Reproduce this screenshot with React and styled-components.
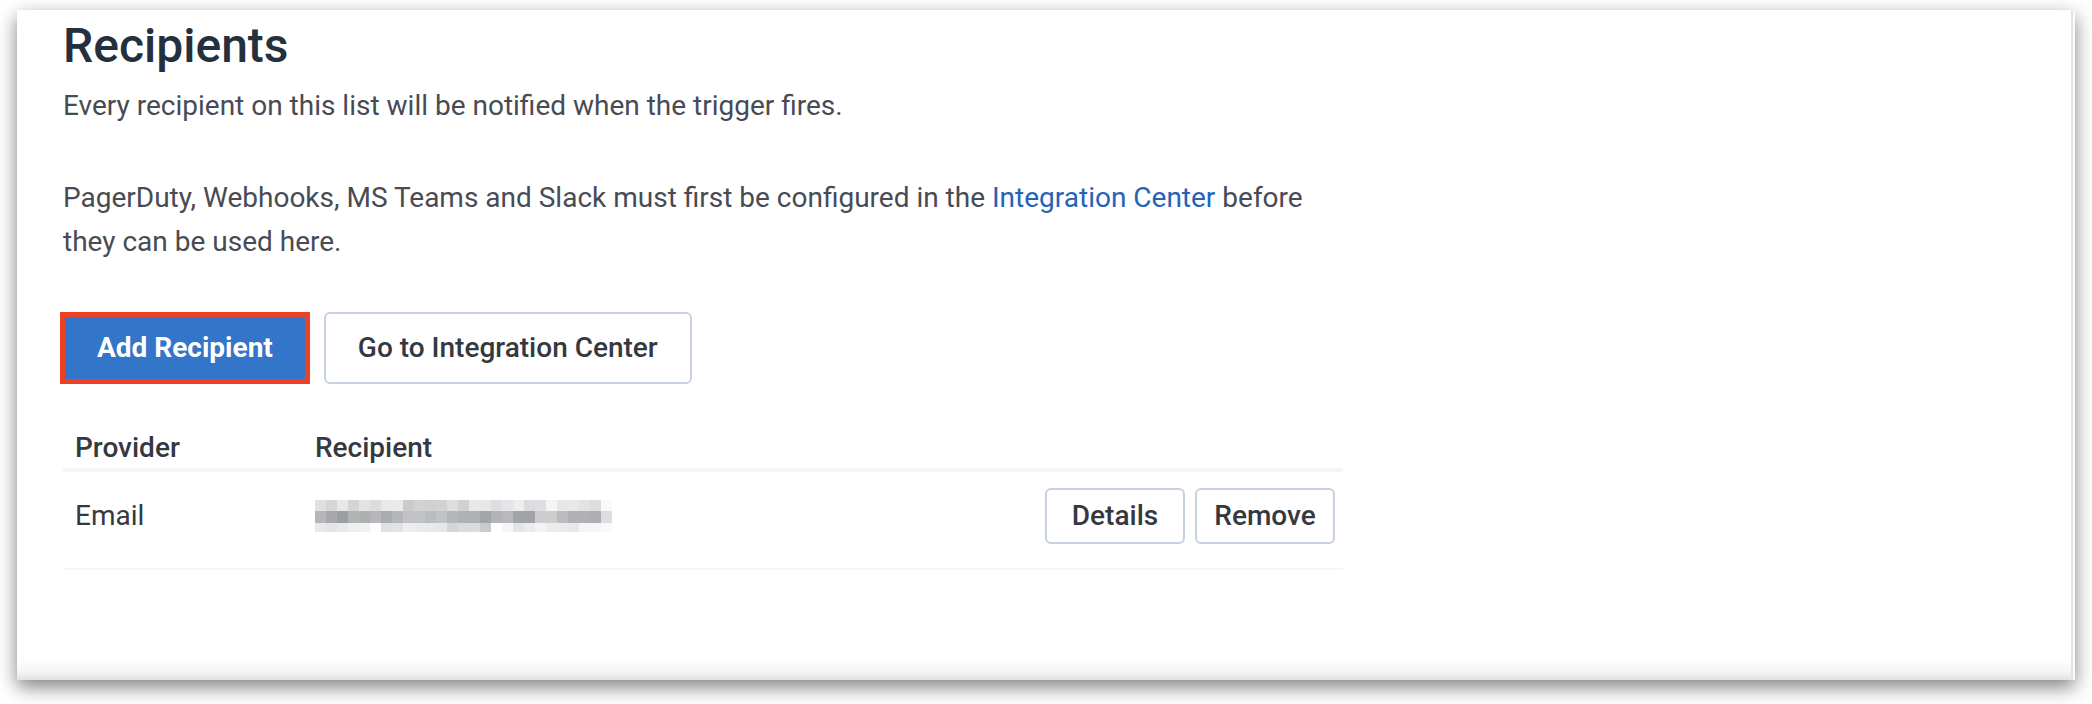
import React from "react";
import styled, { createGlobalStyle } from "styled-components";

const GlobalStyle = createGlobalStyle`
  * {
    box-sizing: border-box;
  }

  body {
    margin: 0;
    background: #fff;
    color: #36383f;
    font-family: Roboto, "Liberation Sans", sans-serif;
    font-size: 28px;
    line-height: 44px;
  }
`;

const Page = styled.div`
  padding: 10px 17px 24px;
`;

const Card = styled.main`
  padding: 8px 46px 110px;
  border-right: 2px solid #fafafa;
  background: linear-gradient(to top, #e2e2e2, #f4f4f4 8px, #fdfdfd 18px, #fff 26px);
  box-shadow:
    inset -2px 0 0 #e4e4e4,
    0 7px 18px rgba(0, 0, 0, 0.5);
`;

const Section = styled.section`
  max-width: 1280px;
`;

const Title = styled.h1`
  margin: 0 0 10px;
  color: #25303e;
  font-size: 48px;
  font-weight: 500;
  line-height: 56px;
`;

const Text = styled.p`
  margin: 0 0 48px;
  color: #484b54;
`;

const Link = styled.a`
  color: #2463b6;
  text-decoration: none;
`;

const Actions = styled.div`
  display: flex;
  align-items: center;
  gap: 14px;
  margin: 0 0 48px -3px;
`;

const Button = styled.button`
  height: 72px;
  padding: 0 32px;
  border: 2px solid #c8d1df;
  border-radius: 6px;
  background: #fff;
  color: #36383f;
  font: inherit;
  font-weight: 500;
  line-height: 32px;
  cursor: pointer;
`;

const HighlightedButton = styled(Button)`
  border: 5px solid #ec4127;
  border-radius: 0;
  background: #3375c8;
  color: #fff;
  font-weight: 700;
`;

const SmallButton = styled(Button)`
  width: 140px;
  height: 56px;
  padding: 0;
`;

const Table = styled.table`
  width: 100%;
  border-spacing: 0;
  table-layout: fixed;
  line-height: 32px;
`;

const HeadCell = styled.th`
  width: ${({ $width }) => $width || "auto"};
  padding: 0 12px 4px;
  border-bottom: 4px solid #f4f6fb;
  font-weight: 500;
  text-align: left;
`;

const Cell = styled.td`
  padding: 16px 12px 24px;
  border-bottom: 2px solid #f4f6fb;
  vertical-align: middle;
`;

const RowActions = styled.div`
  display: flex;
  justify-content: flex-end;
  gap: 10px;
  margin-right: -4px;
`;

const Mosaic = styled.svg`
  display: block;
`;

const mosaicRows = [
  {
    y: 0,
    height: 11,
    colors:
      "dfe0e2 d5d6d8 e7e8ea d3d4d6 e3e3e3 dddddd e8eae9 eaeae9 cacbcd d1d2d4 cfd0d2 d1d2d4 dedede d0d1d2 e7e9e7 e6e7e6 dddee0 e4e5e8 eeeeee dbdcdf dddee0 f2f5f3 e7e7e7 e7e8eb e3e3e3 dddddd f8faf9",
  },
  {
    y: 11,
    height: 12,
    colors:
      "b5b6b8 a8a9ae 9d9ea3 b2b3b5 afb0b1 b6b7b9 aaabb0 b6b7b9 c1c2c6 c1c2c6 bbbcbe c2c3c6 b5b6b9 b0b1b5 b0b1b5 a3a4a9 b3b4b7 b8b9bb a3a4a8 a2a3a7 cccdd0 cccdcf bbbcbe b0b1b5 b0b1b4 aeafb2 dedee1",
  },
  {
    y: 23,
    height: 9,
    colors:
      "e9e9ea e5e5e6 e8e9eb eef0ef f0f2f1 fdfdfd dfe0e4 e2e3e6 eeeeee eaebec e8e9ea e6e7e9 d4d5d8 dadbdd dbdcde c9cacc fefefe f6f6f6 e3e4e7 ebedec f3f3f3 ececec ebebec e8e8eb f5f5f5 f6f6f6 f9f9f9",
  },
];

function RedactedAddress() {
  return (
    <Mosaic width="297" height="32" viewBox="0 0 297 32" shapeRendering="crispEdges" role="img" aria-label="Hidden address">
      {mosaicRows.map((row) =>
        row.colors
          .split(" ")
          .map((color, i) => (
            <rect key={`${row.y}-${i}`} x={i * 11} y={row.y} width="11" height={row.height} fill={`#${color}`} />
          ))
      )}
    </Mosaic>
  );
}

export default function App() {
  return (
    <Page>
      <GlobalStyle />
      <Card>
        <Section>
          <Title>Recipients</Title>
          <Text>Every recipient on this list will be notified when the trigger fires.</Text>
          <Text>
            PagerDuty, Webhooks, MS Teams and Slack must first be configured in the{" "}
            <Link href="#integrations">Integration Center</Link> before they can be used here.
          </Text>
          <Actions>
            <HighlightedButton type="button">Add Recipient</HighlightedButton>
            <Button type="button">Go to Integration Center</Button>
          </Actions>
          <Table>
            <thead>
              <tr>
                <HeadCell scope="col" $width="240px">Provider</HeadCell>
                <HeadCell scope="col">Recipient</HeadCell>
                <HeadCell as="td" $width="320px" />
              </tr>
            </thead>
            <tbody>
              <tr>
                <Cell>Email</Cell>
                <Cell>
                  <RedactedAddress />
                </Cell>
                <Cell>
                  <RowActions>
                    <SmallButton type="button">Details</SmallButton>
                    <SmallButton type="button">Remove</SmallButton>
                  </RowActions>
                </Cell>
              </tr>
            </tbody>
          </Table>
        </Section>
      </Card>
    </Page>
  );
}
